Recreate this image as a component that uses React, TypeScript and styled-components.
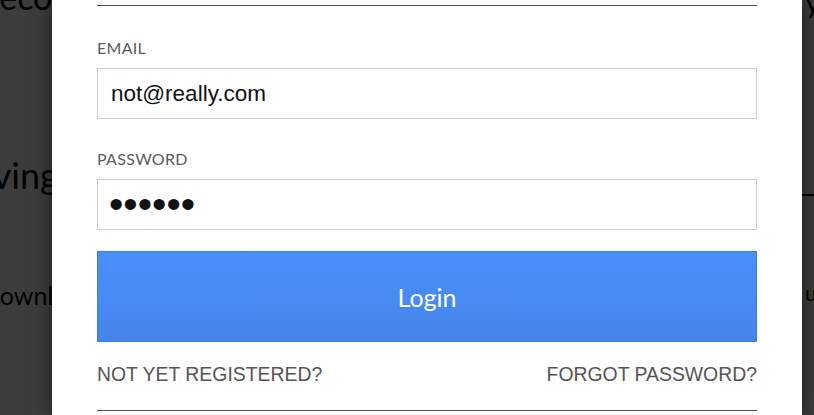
import React from 'react';
import styled, { createGlobalStyle } from 'styled-components';

const GlobalStyle = createGlobalStyle`
  html, body {
    margin: 0;
    padding: 0;
    height: 100%;
    overflow: hidden;
    background: #fff;
  }
  #root {
    height: 100%;
  }
`;

const Page = styled.div`
  position: relative;
  height: 415px;
  overflow: hidden;
  display: grid;
  grid-template-columns: 52px 1fr 12px;
  font-family: Lato, 'Noto Sans', sans-serif;
  color: #000;
`;

const BgColumn = styled.div`
  display: flex;
  flex-direction: column;
  overflow: hidden;
  white-space: nowrap;
`;

const BgText = styled.div<{ $size: number; $top: number; $indent?: number }>`
  font-size: ${({ $size }) => $size}px;
  line-height: 1;
  margin-top: ${({ $top }) => $top}px;
  text-indent: ${({ $indent = 0 }) => $indent}px;
`;

const BgRule = styled.div<{ $top: number }>`
  margin-top: ${({ $top }) => $top}px;
  height: 2px;
  background: #000;
`;

const Overlay = styled.div`
  position: absolute;
  inset: 0;
  background: rgba(0, 0, 0, 0.765);
`;

const Modal = styled.div`
  position: absolute;
  top: 0;
  bottom: 0;
  left: 52px;
  width: 750px;
  box-sizing: border-box;
  padding: 0 45px;
  background: #fff;
  box-shadow: 0 0 18px rgba(0, 0, 0, 0.55);
  display: flex;
  flex-direction: column;
`;

const Rule = styled.div<{ $top: number }>`
  margin-top: ${({ $top }) => $top}px;
  height: 1px;
  background: #4a4a4a;
  flex-shrink: 0;
`;

const Field = styled.label<{ $top: number }>`
  display: flex;
  flex-direction: column;
  gap: 10px;
  margin-top: ${({ $top }) => $top}px;
`;

const Label = styled.span`
  font-family: Lato, 'Noto Sans', sans-serif;
  font-weight: 400;
  font-size: 16px;
  line-height: 20px;
  letter-spacing: 0.3px;
  color: #5c5c5c;
  text-transform: uppercase;
`;

const Input = styled.input<{ $masked?: boolean }>`
  box-sizing: border-box;
  height: 51px;
  width: 100%;
  margin: 0;
  padding: 0 ${({ $masked }) => ($masked ? 11 : 13)}px;
  border: 1px solid #cfcfcf;
  border-radius: 0;
  outline: none;
  background: #fff;
  font-family: 'Liberation Sans', Arial, sans-serif;
  font-size: ${({ $masked }) => ($masked ? 41 : 22.5)}px;
  color: #111;
`;

const LoginButton = styled.button`
  margin-top: 21px;
  height: 91px;
  width: 100%;
  border: 1px solid #3a7de6;
  border-radius: 0;
  background: linear-gradient(#4a90fa, #4585ea);
  color: #fff;
  font-family: Lato, 'Noto Sans', sans-serif;
  font-size: 25px;
  cursor: pointer;
  flex-shrink: 0;
`;

const Links = styled.div`
  margin-top: 21px;
  display: flex;
  justify-content: space-between;
`;

const TextLink = styled.a`
  font-family: 'Liberation Sans', Arial, sans-serif;
  font-size: 19.4px;
  line-height: 22px;
  color: #555;
  text-decoration: none;
  cursor: pointer;
`;

export default function App() {
  return (
    <>
      <GlobalStyle />
      <Page>
        <BgColumn>
          <BgText $size={34} $top={-20} $indent={-21}>
            Recover your account
          </BgText>
          <BgText $size={36} $top={143} $indent={-44}>
            Saving your work
          </BgText>
          <BgText $size={25} $top={90} $indent={-19}>
            Download
          </BgText>
        </BgColumn>
        <div />
        <BgColumn>
          <BgText $size={30} $top={-14} $indent={3}>
            y
          </BgText>
          <BgRule $top={178} />
          <BgText $size={21} $top={86} $indent={3}>
            u
          </BgText>
        </BgColumn>
        <Overlay />
        <Modal>
          <Rule $top={5} />
          <Field $top={32}>
            <Label>Email</Label>
            <Input type="email" defaultValue="not@really.com" />
          </Field>
          <Field $top={30}>
            <Label>Password</Label>
            <Input $masked type="password" defaultValue="secret" />
          </Field>
          <LoginButton type="button">Login</LoginButton>
          <Links>
            <TextLink>NOT YET REGISTERED?</TextLink>
            <TextLink>FORGOT PASSWORD?</TextLink>
          </Links>
          <Rule $top={25} />
        </Modal>
      </Page>
    </>
  );
}
